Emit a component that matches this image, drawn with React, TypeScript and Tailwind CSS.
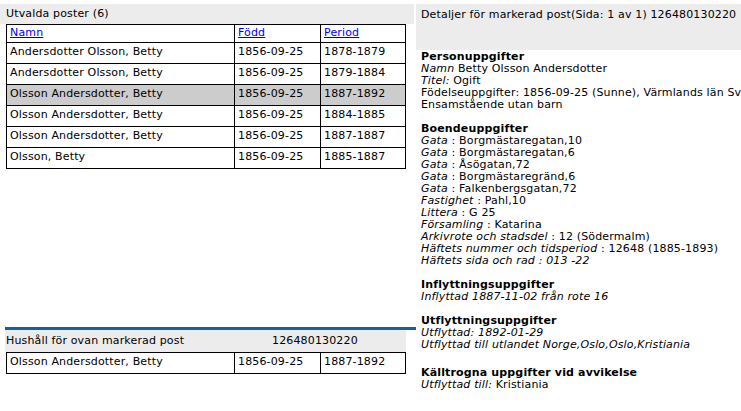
const rows = [
  { name: 'Andersdotter Olsson, Betty', born: '1856-09-25', period: '1878-1879' },
  { name: 'Andersdotter Olsson, Betty', born: '1856-09-25', period: '1879-1884' },
  { name: 'Olsson Andersdotter, Betty', born: '1856-09-25', period: '1887-1892', selected: true },
  { name: 'Olsson Andersdotter, Betty', born: '1856-09-25', period: '1884-1885' },
  { name: 'Olsson Andersdotter, Betty', born: '1856-09-25', period: '1887-1887' },
  { name: 'Olsson, Betty', born: '1856-09-25', period: '1885-1887' },
]

const cell = 'border border-black px-[3px] h-[21px] p-0 align-middle'

function PostRow({ name, born, period, selected }: { name: string; born: string; period: string; selected?: boolean }) {
  return (
    <tr className={selected ? 'bg-[#cccccc]' : ''}>
      <td className={`${cell} w-[228px]`}>{name}</td>
      <td className={`${cell} w-[86px]`}>{born}</td>
      <td className={cell}>{period}</td>
    </tr>
  )
}

function Field({ label, value }: { label: string; value: string }) {
  return (
    <div className="whitespace-nowrap">
      <i>{label}</i> : {value}
    </div>
  )
}

export default function App() {
  return (
    <div className="flex w-[741px] h-[411px] overflow-hidden bg-white pt-[4px] text-[11px] tracking-[0.15px] text-black font-['DejaVu_Sans',Verdana,sans-serif]">
      {/* vänster: utvalda poster + hushåll */}
      <div className="w-[416px] shrink-0 flex flex-col">
        <div className="w-[414px] h-[20px] bg-[#ececec] pl-[6px] leading-[20px]">Utvalda poster (6)</div>
        <table className="ml-[6px] w-[400px] border-collapse table-fixed">
          <tbody>
            <tr>
              <td className="border border-black px-[3px] h-[17px] w-[228px]">
                <a href="#" className="text-[#0000ee] underline">Namn</a>
              </td>
              <td className="border border-black px-[3px] h-[17px] w-[86px]">
                <a href="#" className="text-[#0000ee] underline">Född</a>
              </td>
              <td className="border border-black px-[3px] h-[17px]">
                <a href="#" className="text-[#0000ee] underline">Period</a>
              </td>
            </tr>
            {rows.map((r, i) => (
              <PostRow key={i} {...r} />
            ))}
          </tbody>
        </table>

        <div className="mt-[158px] ml-[5px] w-[411px] h-[3px] bg-[#12639a]" />
        <div className="ml-[5px] w-[401px] h-[22px] bg-[#ececec] flex items-center leading-[22px]">
          <span className="w-[267px] pl-[1px]">Hushåll för ovan markerad post</span>
          <span>126480130220</span>
        </div>
        <table className="ml-[6px] w-[400px] border-collapse table-fixed">
          <tbody>
            <PostRow name="Olsson Andersdotter, Betty" born="1856-09-25" period="1887-1892" />
          </tbody>
        </table>
      </div>

      {/* höger: detaljer */}
      <div className="flex-1 min-w-0 overflow-hidden">
        <div className="h-[46px] bg-[#ececec] pl-[5px] pt-[4px] leading-[13px] whitespace-nowrap">
          Detaljer för markerad post(Sida: 1 av 1) 126480130220
        </div>
        <div className="pl-[5px] pt-[1px] leading-[12px]">
          <div className="font-bold">Personuppgifter</div>
          <div><i>Namn</i> Betty Olsson Andersdotter</div>
          <div><i>Titel:</i> Ogift</div>
          <div className="whitespace-nowrap">Födelseuppgifter: 1856-09-25 (Sunne), Värmlands län Sverige</div>
          <div>Ensamstående utan barn</div>

          <div className="font-bold mt-[12px]">Boendeuppgifter</div>
          <Field label="Gata" value="Borgmästaregatan,10" />
          <Field label="Gata" value="Borgmästaregatan,6" />
          <Field label="Gata" value="Åsögatan,72" />
          <Field label="Gata" value="Borgmästaregränd,6" />
          <Field label="Gata" value="Falkenbergsgatan,72" />
          <Field label="Fastighet" value="Pahl,10" />
          <Field label="Littera" value="G 25" />
          <Field label="Församling" value="Katarina" />
          <Field label="Arkivrote och stadsdel" value="12 (Södermalm)" />
          <Field label="Häftets nummer och tidsperiod" value="12648 (1885-1893)" />
          <div className="italic">Häftets sida och rad : 013 -22</div>

          <div className="font-bold mt-[12px]">Inflyttningsuppgifter</div>
          <div className="italic">Inflyttad 1887-11-02 från rote 16</div>

          <div className="font-bold mt-[12px]">Utflyttningsuppgifter</div>
          <div className="italic">Utflyttad: 1892-01-29</div>
          <div className="italic whitespace-nowrap">Utflyttad till utlandet Norge,Oslo,Oslo,Kristiania</div>

          <div className="font-bold mt-[16px]">Källtrogna uppgifter vid avvikelse</div>
          <div><i>Utflyttad till:</i> Kristiania</div>
        </div>
      </div>
    </div>
  )
}
